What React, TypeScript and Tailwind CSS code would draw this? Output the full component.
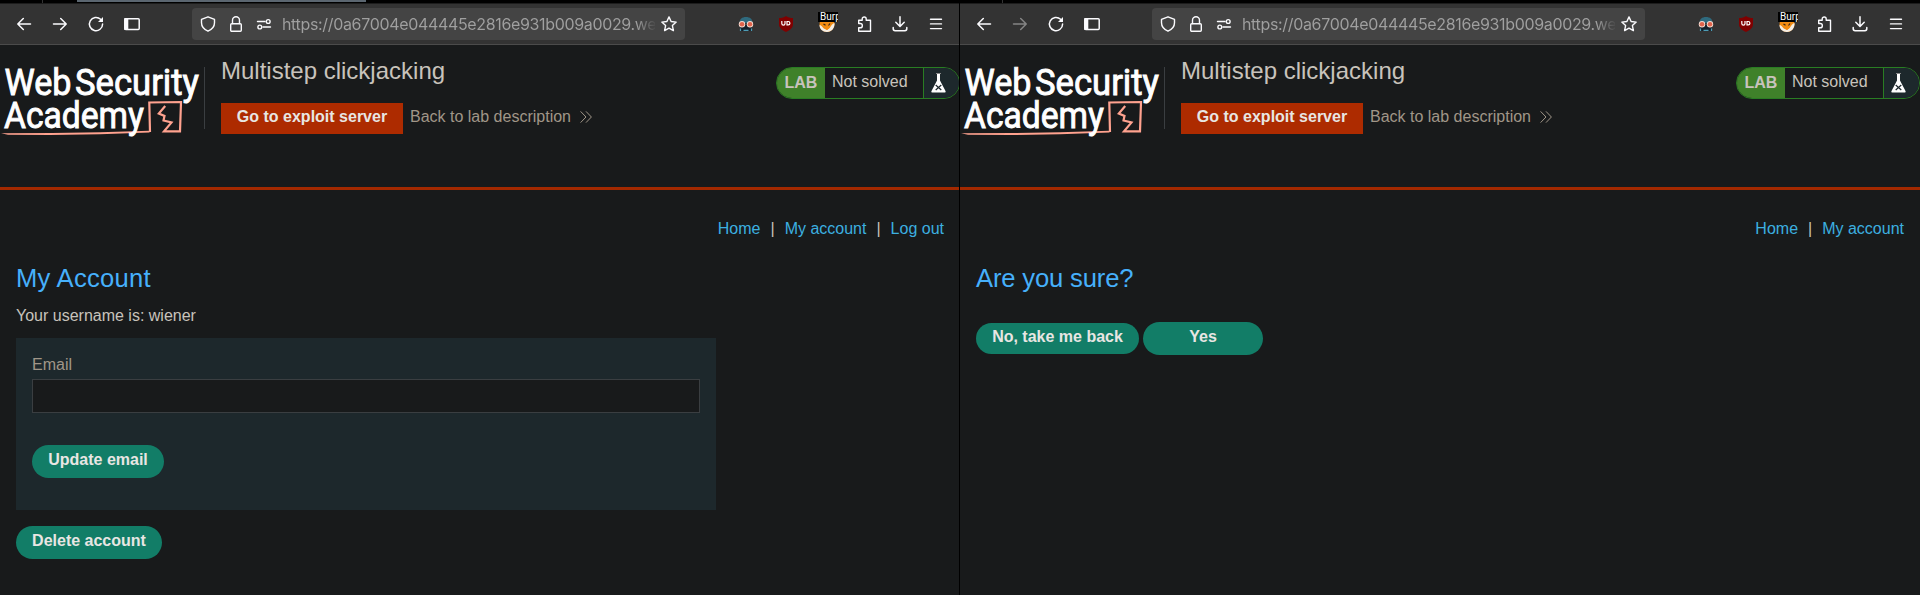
import React from "react";

const stroke = { fill: "none", stroke: "currentColor", strokeLinecap: "round", strokeLinejoin: "round" } as const;

function Toolbar({ canGoForward }: { canGoForward: boolean }) {
  return (
    <div className="flex h-[42px] items-start border-t border-b border-t-[#1c1c1c] border-b-[#4b4b4b] bg-[#333333] pt-[4px] pr-[14px] pl-[14px] text-[#fbfbfe]">
      <div className="flex h-8 w-[178px] shrink-0 items-center gap-4">
        <svg width="20" height="20" viewBox="0 0 20 20" strokeWidth="1.5" {...stroke}>
          <path d="M16.5 10H4M9.3 4.5L3.8 10l5.5 5.5" />
        </svg>
        <svg width="20" height="20" viewBox="0 0 20 20" strokeWidth="1.5" {...stroke} className={canGoForward ? "" : "text-[#858585]"}>
          <path d="M3.5 10H16M10.7 4.5l5.5 5.5-5.5 5.5" />
        </svg>
        <svg width="20" height="20" viewBox="0 0 20 20" strokeWidth="1.5" {...stroke}>
          <path d="M16.6 10a6.600 6.600 0 1 1-2-4.700l1.200 1.100" />
          <path d="M17 3v5h-5z" fill="currentColor" stroke="none" />
        </svg>
        <svg width="20" height="20" viewBox="0 0 20 20" strokeWidth="1.5" {...stroke}>
          <rect x="2.8" y="4.8" width="14.4" height="10.6" rx="1" />
          <path d="M2.3 4h4v12h-4z" fill="currentColor" stroke="none" />
        </svg>
      </div>
      <div className="flex h-8 w-[493px] shrink-0 items-center rounded bg-[#444444] pl-[8px]">
        <svg width="16" height="16" viewBox="0 0 16 16" strokeWidth="1.4" {...stroke}>
          <path d="M8 .8L14.5 3.400v3.400c0 3.600-2.600 6.700-6.500 8.400-3.900-1.700-6.500-4.800-6.500-8.400V3.400z" />
        </svg>
        <svg width="16" height="16" viewBox="0 0 16 16" strokeWidth="1.4" {...stroke} className="ml-3">
          <rect x="2.700" y="7.700" width="10.600" height="7.500" rx="1" />
          <path d="M4.500 7.500V4.300a3.500 3.500 0 0 1 7 0v3.200" />
        </svg>
        <svg width="16" height="16" viewBox="0 0 16 16" strokeWidth="1.4" {...stroke} className="ml-3">
          <path d="M1.500 5.500H9M7 11h7.500" />
          <circle cx="12.200" cy="5.500" r="1.900" />
          <circle cx="3.800" cy="11" r="1.900" />
        </svg>
        <div className="ml-[10px] w-[373px] overflow-hidden bg-gradient-to-r from-[#a0a0a0] from-95% to-[#4c4c4c] bg-clip-text font-['Inter'] text-[16px] leading-6 tracking-[-0.340px] whitespace-nowrap text-transparent">
          https://0a67004e044445e2816e931b009a0029.we
        </div>
        <svg width="16" height="16" viewBox="0 0 16 16" strokeWidth="1.400" {...stroke} className="ml-[6px]">
          <path d="M8 .9l2.100 4.600 5.100.6-3.800 3.500 1 5L8 12.100l-4.400 2.500 1-5L.8 6.100l5.100-.6z" />
        </svg>
      </div>
      <div className="ml-[53px] flex h-8 shrink-0 items-center">
        <svg width="16" height="16" viewBox="0 0 16 16">
          <path d="M1.500 7C1.500 3 4 1 8 1s6.500 2 6.500 6z" fill="#2f6a7e" />
          <path d="M2 9h12l-1 6H3z" fill="#15202a" />
          <circle cx="4" cy="8.200" r="3.200" fill="#f4d9cf" />
          <circle cx="12" cy="8.200" r="3.200" fill="#f4d9cf" />
          <circle cx="4" cy="8.200" r="2.300" fill="#e0634b" />
          <circle cx="12" cy="8.200" r="2.300" fill="#e0634b" />
          <path d="M2.500 12.500V15M5.500 14.300h5M13.500 12.500V15" stroke="#4d9cb5" strokeWidth="1.200" />
        </svg>
        <svg width="16" height="16" viewBox="0 0 16 16" className="ml-6">
          <path d="M8 0c2 1.600 4 2 7 2v6c0 4-3 6-7 8-4-2-7-4-7-8V2c3 0 5-.4 7-2z" fill="#800000" />
          <path d="M3.800 5v2.500a1.600 1.600 0 0 0 3.200 0V5M9 5.500v3.400h1.200a1.700 1.700 0 0 0 0-3.400z" fill="none" stroke="#fff" strokeWidth="1.200" />
        </svg>
        <div className="relative ml-[25px] h-4 w-4">
          <svg width="16" height="16" viewBox="0 0 16 16">
            <circle cx="8" cy="8.500" r="7.500" fill="#f28c13" />
            <path d="M.5 9c1.500 0 2.500 1.500 4 3.300L8 14l2-1.500C12 11.500 12 8 15.500 7c.5 5-3 9-7.500 9S.5 13 .5 9z" fill="#f5eee5" />
            <path d="M4.500 11.500L8 10l3 1.500L8 14z" fill="#f28c13" />
            <path d="M4.500 8l2 1.200M9.500 9.500l1.500-2" stroke="#3b2616" strokeWidth="1.200" />
          </svg>
          <div className="absolute -top-[4px] -left-[1px] h-[10px] w-[20px] overflow-hidden bg-black pl-[2px] font-['Roboto'] text-[10px] leading-[9px] text-white">
            Burp
          </div>
        </div>
        <svg width="16" height="16" viewBox="0 0 16 16" strokeWidth="1.400" {...stroke} className="ml-[22px]">
          <path d="M1.700 15.200v-3.400h1.500a1.700 1.700 0 0 0 0-4.300H1.700V4.300h3.500V3a2 2 0 0 1 4 0v1.300h4.300v10.900z" />
        </svg>
        <svg width="16" height="16" viewBox="0 0 16 16" strokeWidth="1.500" {...stroke} className="ml-[19px]">
          <path d="M8 .8v9.400M3.800 6.300L8 10.500l4.200-4.200M1.200 11.500v1.300a1.900 1.900 0 0 0 1.900 1.900h9.800a1.900 1.900 0 0 0 1.900-1.900v-1.300" />
        </svg>
        <svg width="16" height="16" viewBox="0 0 16 16" strokeWidth="1.400" {...stroke} className="ml-5">
          <path d="M2.500 3.200h11M2.500 7.900h11M2.500 12.600h11" />
        </svg>
      </div>
    </div>
  );
}

function AcademyLogo() {
  return (
    <svg width="204" height="80" viewBox="0 0 204 80" className="shrink-0 overflow-visible font-['Roboto'] text-[37px] font-normal" fill="#fff" stroke="#fff" strokeWidth="0.900">
      <text x="4.500" y="38.300" textLength="67" lengthAdjust="spacingAndGlyphs">Web</text>
      <text x="75" y="38.300" textLength="124" lengthAdjust="spacingAndGlyphs">Security</text>
      <path d="M1 76.200L52 76 100 75.200 149.500 73.800V75.600L100 77.300 50 78 8 77.800z" fill="#ffa28f" stroke="none" />
      <text x="4" y="70.600" textLength="140" lengthAdjust="spacingAndGlyphs">Academy</text>
      <path d="M150 75L149.300 45.500 181 45 180 74.300H164L171.500 65.500 163.500 63.500 164.500 59 158.800 56.500 165.200 49" fill="none" stroke="#ffa28f" strokeWidth="2.200" />
    </svg>
  );
}

function LabHeader() {
  return (
    <header className="flex h-[145px] items-start border-b-[3px] border-[#a32900] pt-[12px]">
      <AcademyLogo />
      <div className="mt-[10px] h-[62px] w-px shrink-0 bg-[#3a3e41]" />
      <div className="ml-4 flex-1">
        <h2 className="h-[46px] text-[24px] leading-[28px]">Multistep clickjacking</h2>
        <div className="flex items-center">
          <a className="h-[31px] w-[182px] bg-[#ad2b00] text-center font-bold leading-[28px] text-[#e8e6e3]">Go to exploit server</a>
          <a className="ml-[7px] flex h-[31px] items-center pb-[3px] text-[#a09688]">
            Back to lab description
            <svg width="12" height="12" viewBox="0 0 12 12" className="ml-[9px]" fill="none" stroke="currentColor" strokeWidth="1">
              <path d="M.6.400L6 6 .6 11.600M6 .400L11.400 6 6 11.600" />
            </svg>
          </a>
        </div>
      </div>
      <div className="mt-[10px] flex h-[32px] w-[184px] shrink-0 overflow-hidden rounded-full border border-[#297d23] leading-[29px]">
        <div className="w-[48px] bg-[#3f812a] pl-[7.500px] font-bold text-[#c8c3bc]">LAB</div>
        <div className="w-[98px] pl-[7px] leading-[28px]">Not solved</div>
        <div className="flex-1 border-l border-[#297d23] bg-[#1d282c] pt-[5px] pl-[7px]">
          <svg width="15" height="20" viewBox="0 0 15 20">
            <path d="M5 .500h5" stroke="#888" />
            <path d="M6 1h3v6.500L14.500 18c.4.900 0 1.500-.8 1.500H1.300C.5 19.500.1 18.900.5 18L6 7.500z" fill="#fff" />
            <path d="M4.700 12l5.600 5M10.300 12l-5.600 5" stroke="#1e282d" strokeWidth="1.200" />
          </svg>
        </div>
      </div>
    </header>
  );
}

function Nav({ links }: { links: string[] }) {
  return (
    <nav className="flex h-[66px] justify-end pt-[30px] pr-4 leading-[18px]">
      {links.map((link, i) => (
        <React.Fragment key={link}>
          {i > 0 && <span className="mx-[10px]">|</span>}
          <a className="text-[#3cb0e0]">{link}</a>
        </React.Fragment>
      ))}
    </nav>
  );
}

function BrowserPane({ tabs, canGoForward, links, children }: { tabs: React.ReactNode; canGoForward: boolean; links: string[]; children: React.ReactNode }) {
  return (
    <section className="relative h-full w-[960px] shrink-0">
      <div className="flex h-[3px] bg-black">{tabs}</div>
      <Toolbar canGoForward={canGoForward} />
      <LabHeader />
      <Nav links={links} />
      <main className="px-4">{children}</main>
    </section>
  );
}

export default function App() {
  return (
    <div className="relative flex h-[595px] w-[1920px] overflow-hidden bg-[#181a1b] font-['Liberation_Sans',sans-serif] text-[16px] text-[#c8c3bc]">
      <BrowserPane
        canGoForward
        links={["Home", "My account", "Log out"]}
        tabs={
          <>
            <div className="ml-[42px] w-px bg-[#333]" />
            <div className="ml-[34px] h-[2px] w-[289px] bg-[#5b6670]" />
          </>
        }
      >
        <h1 className="h-[50px] pt-[7px] text-[25.600px] leading-[30px] tracking-[0.250px] text-[#46b0fb]">My Account</h1>
        <p className="h-[32px] leading-[20px]">Your username is: wiener</p>
        <form className="h-[172px] w-[700px] bg-[#1d282c] px-4 pt-[17px]">
          <label className="block h-[24px] leading-[20px] text-[#a09688]">Email</label>
          <input className="block h-[34px] w-full border border-[#3a3e41] bg-[#181a1b] px-2 outline-none" />
          <button type="button" className="mt-8 h-[33px] w-[132px] rounded-full bg-[#127d67] pb-[4px] font-bold text-[#e8e6e3]">
            Update email
          </button>
        </form>
        <button type="button" className="mt-4 h-[33px] w-[146px] rounded-full bg-[#127d67] pb-[4px] font-bold text-[#e8e6e3]">
          Delete account
        </button>
      </BrowserPane>
      <BrowserPane canGoForward={false} links={["Home", "My account"]} tabs={<div className="ml-[42px] w-px bg-[#333]" />}>
        <h1 className="h-[66px] pt-[7px] text-[25.600px] leading-[30px] tracking-[-0.150px] text-[#46b0fb]">Are you sure?</h1>
        <div className="flex items-center gap-1">
          <button type="button" className="h-[31px] w-[163px] rounded-full bg-[#127d67] pb-[4px] font-bold text-[#e8e6e3]">
            No, take me back
          </button>
          <button type="button" className="h-[33px] w-[120px] rounded-full bg-[#127d67] pb-[4px] font-bold text-[#e8e6e3]">
            Yes
          </button>
        </div>
      </BrowserPane>
      <div className="absolute top-0 left-[959px] h-full w-px bg-black" />
    </div>
  );
}
